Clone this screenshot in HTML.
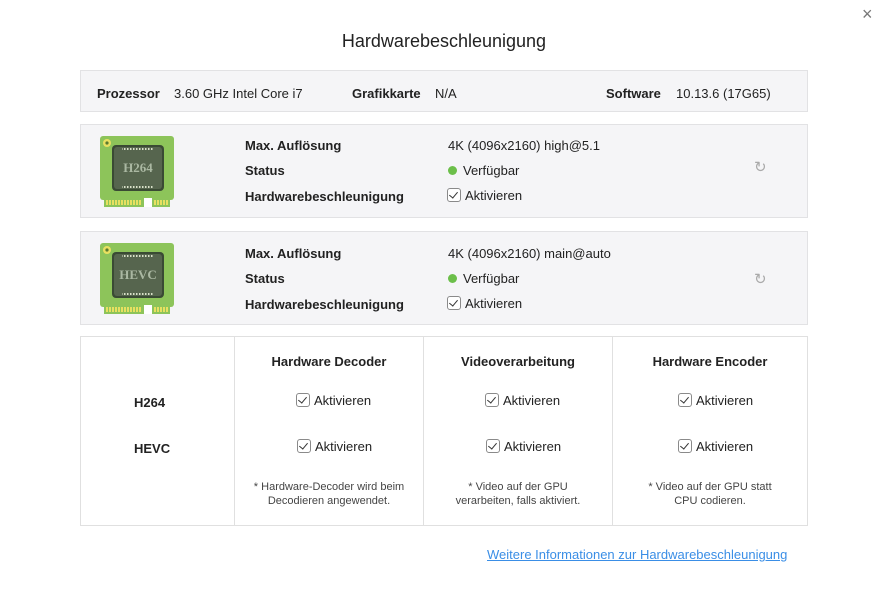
<!DOCTYPE html><html><head><meta charset="utf-8"><style>
body{margin:0;width:888px;height:591px;background:#fff;font-family:"Liberation Sans",sans-serif;color:#222;position:relative;overflow:hidden;font-size:13px}
.a{position:absolute;white-space:nowrap}
.b{font-weight:bold}
.box{position:absolute;left:80px;width:726px;background:#f5f5f7;border:1px solid #e2e2e4}
.cb{display:inline-block;width:12px;height:12px;border:1px solid #8a8a8a;border-radius:3px;background:#fff;vertical-align:-2px;margin-right:4px;position:relative}
.cb:after{content:"";position:absolute;left:3px;top:1px;width:4px;height:7px;border:solid #333;border-width:0 1.5px 1.5px 0;transform:rotate(40deg)}
.dot{display:inline-block;width:9px;height:9px;border-radius:50%;background:#6cbf4a;margin-right:6px;vertical-align:0}
.chip{position:absolute;left:100px;width:74px;height:71px}
.tc{position:absolute;text-align:center;font-size:11px;color:#444;line-height:14px}
</style></head><body>
<svg width="0" height="0" style="position:absolute"><defs><pattern id="st" width="3" height="6" patternUnits="userSpaceOnUse"><rect width="2" height="6" fill="#e8e060"/></pattern><pattern id="pn" width="3" height="3" patternUnits="userSpaceOnUse"><rect width="1.5" height="3" fill="#d8e0c8"/></pattern></defs></svg>
<div class="a" style="left:862px;top:4px;font-size:18px;color:#777">×</div>
<div class="a" style="left:0;width:888px;text-align:center;top:31px;font-size:18px;white-space:normal">Hardwarebeschleunigung</div>
<div class="box" style="top:70px;height:40px"></div>
<div class="a b" style="left:97px;top:86px">Prozessor</div>
<div class="a" style="left:174px;top:86px">3.60 GHz Intel Core i7</div>
<div class="a b" style="left:352px;top:86px">Grafikkarte</div>
<div class="a" style="left:435px;top:86px">N/A</div>
<div class="a b" style="left:606px;top:86px">Software</div>
<div class="a" style="left:676px;top:86px">10.13.6 (17G65)</div>

<div class="box" style="top:124px;height:92px"></div>
<div class="box" style="top:231px;height:92px"></div>

<svg class="chip" style="top:136px" viewBox="0 0 74 71"><rect x="0" y="0" width="74" height="64" rx="3" fill="#8dc45a"/><rect x="4" y="62" width="66" height="9" fill="#8dc45a"/><rect x="44" y="62" width="8" height="9" fill="#fff"/><rect x="6" y="64" width="36" height="5" fill="url(#st)"/><rect x="54" y="64" width="14" height="5" fill="url(#st)"/><circle cx="7" cy="7" r="4" fill="#e8e060"/><circle cx="7" cy="7" r="1.6" fill="#5a7a30"/><rect x="12" y="9" width="52" height="46" rx="4" fill="#3a4a34"/><rect x="14" y="11" width="48" height="42" rx="3" fill="#56654e"/><rect x="22" y="12" width="32" height="2" fill="url(#pn)"/><rect x="22" y="50" width="32" height="2" fill="url(#pn)"/><text x="38" y="36" text-anchor="middle" font-family="Liberation Serif,serif" font-weight="bold" font-size="13" fill="#aab8a2">H264</text></svg>
<svg class="chip" style="top:243px" viewBox="0 0 74 71"><rect x="0" y="0" width="74" height="64" rx="3" fill="#8dc45a"/><rect x="4" y="62" width="66" height="9" fill="#8dc45a"/><rect x="44" y="62" width="8" height="9" fill="#fff"/><rect x="6" y="64" width="36" height="5" fill="url(#st)"/><rect x="54" y="64" width="14" height="5" fill="url(#st)"/><circle cx="7" cy="7" r="4" fill="#e8e060"/><circle cx="7" cy="7" r="1.6" fill="#5a7a30"/><rect x="12" y="9" width="52" height="46" rx="4" fill="#3a4a34"/><rect x="14" y="11" width="48" height="42" rx="3" fill="#56654e"/><rect x="22" y="12" width="32" height="2" fill="url(#pn)"/><rect x="22" y="50" width="32" height="2" fill="url(#pn)"/><text x="38" y="36" text-anchor="middle" font-family="Liberation Serif,serif" font-weight="bold" font-size="13" fill="#aab8a2">HEVC</text></svg>

<div class="a b" style="left:245px;top:138px">Max. Auflösung</div>
<div class="a b" style="left:245px;top:163px">Status</div>
<div class="a b" style="left:245px;top:189px">Hardwarebeschleunigung</div>
<div class="a" style="left:448px;top:138px">4K (4096x2160) high@5.1</div>
<div class="a" style="left:448px;top:163px"><span class="dot"></span>Verfügbar</div>
<div class="a" style="left:447px;top:188px"><span class="cb"></span>Aktivieren</div>
<div class="a" style="left:754px;top:158px;color:#aaa;font-size:15px">↻</div>

<div class="a b" style="left:245px;top:246px">Max. Auflösung</div>
<div class="a b" style="left:245px;top:271px">Status</div>
<div class="a b" style="left:245px;top:297px">Hardwarebeschleunigung</div>
<div class="a" style="left:448px;top:246px">4K (4096x2160) main@auto</div>
<div class="a" style="left:448px;top:271px"><span class="dot"></span>Verfügbar</div>
<div class="a" style="left:447px;top:296px"><span class="cb"></span>Aktivieren</div>
<div class="a" style="left:754px;top:270px;color:#aaa;font-size:15px">↻</div>

<div style="position:absolute;left:80px;top:336px;width:726px;height:188px;border:1px solid #e0e0e0"></div>
<div style="position:absolute;left:234px;top:337px;width:1px;height:188px;background:#e0e0e0"></div>
<div style="position:absolute;left:423px;top:337px;width:1px;height:188px;background:#e0e0e0"></div>
<div style="position:absolute;left:612px;top:337px;width:1px;height:188px;background:#e0e0e0"></div>
<div class="a b" style="left:235px;width:188px;text-align:center;top:354px">Hardware Decoder</div>
<div class="a b" style="left:424px;width:188px;text-align:center;top:354px">Videoverarbeitung</div>
<div class="a b" style="left:613px;width:194px;text-align:center;top:354px">Hardware Encoder</div>
<div class="a b" style="left:134px;top:395px">H264</div>
<div class="a b" style="left:134px;top:441px">HEVC</div>
<div class="a" style="left:296px;top:393px"><span class="cb"></span>Aktivieren</div>
<div class="a" style="left:485px;top:393px"><span class="cb"></span>Aktivieren</div>
<div class="a" style="left:678px;top:393px"><span class="cb"></span>Aktivieren</div>
<div class="a" style="left:297px;top:439px"><span class="cb"></span>Aktivieren</div>
<div class="a" style="left:486px;top:439px"><span class="cb"></span>Aktivieren</div>
<div class="a" style="left:678px;top:439px"><span class="cb"></span>Aktivieren</div>
<div class="tc" style="left:235px;width:188px;top:480px">* Hardware-Decoder wird beim<br>Decodieren angewendet.</div>
<div class="tc" style="left:424px;width:188px;top:480px">* Video auf der GPU<br>verarbeiten, falls aktiviert.</div>
<div class="tc" style="left:613px;width:194px;top:480px">* Video auf der GPU statt<br>CPU codieren.</div>
<div class="a" style="left:487px;top:547px;color:#3a8ee6;text-decoration:underline">Weitere Informationen zur Hardwarebeschleunigung</div>
</body></html>
